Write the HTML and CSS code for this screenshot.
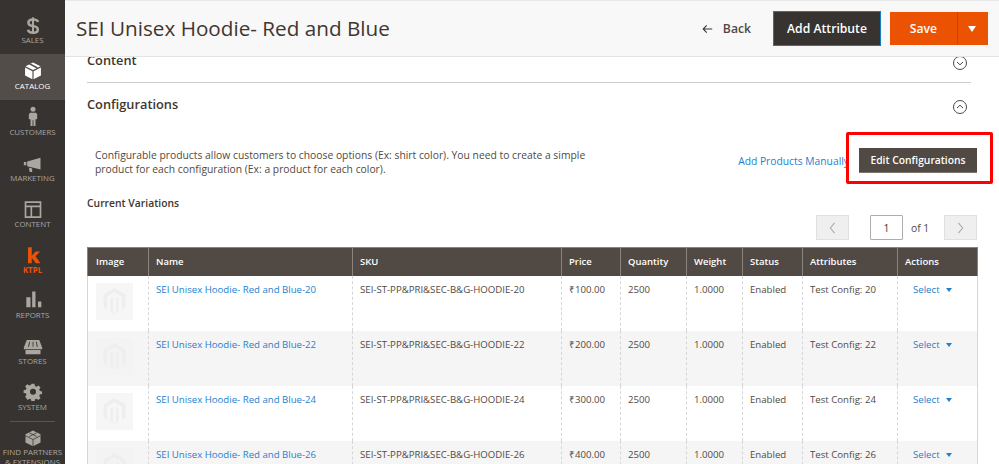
FILE: index.html
```html
<!DOCTYPE html>
<html lang="en">
<head>
<meta charset="utf-8">
<title>SEI Unisex Hoodie- Red and Blue</title>
<link rel="stylesheet" href="styles.css">
</head>
<body>
<div class="app">
  <nav class="side">
    <a class="nav-item"><svg class="nav-ico" viewBox="0 0 24 24"><path fill="none" stroke="#aaa6a0" stroke-width="3" d="M18 9.500C17.500 7 15 6.500 12 6.500S6.500 7.500 6.500 10.500 9 14 12 14.500s5.800 1 5.800 4-2.800 4-5.800 4-5.500-1-6-3.500"/><path stroke="#aaa6a0" stroke-width="2.500" d="M12 4v21"/></svg><span>SALES</span></a>
    <a class="nav-item active"><svg class="nav-ico" viewBox="0 0 24 24"><path fill="#fff" d="M12 3 3 7.500l9 4.500 9-4.500zM2.500 9v9.500l8.800 4.500v-9.500zM21.500 9l-8.800 4.500V23l8.800-4.500z"/><path fill="#524d49" d="M7 5.200 16 9.800l2-1L9 4.200z"/></svg><span>CATALOG</span></a>
    <a class="nav-item"><svg class="nav-ico" viewBox="0 0 24 24"><circle cx="12" cy="4" r="3" fill="#aaa6a0"/><path fill="#aaa6a0" d="M8.500 8h7l1.500 2v6h-2v8h-2.500v-7h-1v7H9v-8H7v-6z"/></svg><span>CUSTOMERS</span></a>
    <a class="nav-item"><svg class="nav-ico" viewBox="0 0 24 24"><path fill="#aaa6a0" d="M1 12h3v4H1zM5 11.500 21 7v14L5 17zM7 18.500l4 1.200V24H8z"/></svg><span>MARKETING</span></a>
    <a class="nav-item"><svg class="nav-ico" viewBox="0 0 24 24"><path fill="#aaa6a0" d="M2 4h20v20H2zm2 2v3h16V6zm0 5v11h5V11zm7 0v11h9V11z"/></svg><span>CONTENT</span></a>
    <a class="nav-item ktpl"><svg class="nav-ico" viewBox="0 0 24 24"><path fill="#eb5202" d="M6 4h4.500v10L15 9h5.500l-5.500 5.800L21 23h-5.500l-5-6.600V23H6z"/></svg><span>KTPL</span></a>
    <a class="nav-item"><svg class="nav-ico" viewBox="0 0 24 24"><path fill="#aaa6a0" d="M4 10h5v12H4zM11 3h4v19h-4zM18 15h4v7h-4z"/></svg><span>REPORTS</span></a>
    <a class="nav-item"><svg class="nav-ico" viewBox="0 0 24 24"><path fill="#aaa6a0" d="M4.500 6h15L23 15v2H1v-2zM3 18h18v5H3z"/><path fill="#373330" d="M7.500 8h1l-1.300 6H6zM11.500 8h1v6h-1zM15.500 8h1l1.300 6h-1.200z"/></svg><span>STORES</span></a>
    <a class="nav-item"><svg class="nav-ico" viewBox="0 0 24 24"><path fill="#aaa6a0" fill-rule="evenodd" d="m10 2 4 0 .6 3 2 .9 2.600-1.700 2.800 2.800-1.700 2.600.8 2 3 .6v3.600l-3 .6-.8 2 1.700 2.600-2.800 2.800-2.600-1.700-2 .9-.6 2.800h-4l-.6-2.800-2-.9-2.600 1.700L1.600 19.400l1.700-2.600-.8-2-3-.6v-3.600l3-.6.8-2L1.600 5.400l2.800-2.800L7 4.300l2.400-1.100zM12 8.500a4 4 0 1 0 0 8 4 4 0 0 0 0-8z" transform="translate(1.200 1.500) scale(.9)"/></svg><span>SYSTEM</span></a>
    <div class="nav-sep"></div>
    <a class="nav-item partners"><svg class="nav-ico" viewBox="0 0 24 24"><path fill="#aaa6a0" d="M12 2 22 7v11l-10 5-10-5V7z"/><path fill="none" stroke="#373330" stroke-width="1" d="M2 9l10 5 10-5M12 14v9M7 5l10 5M17 5 7 10"/></svg><span>FIND PARTNERS<br>&amp; EXTENSIONS</span></a>
  </nav>

  <div class="main">
    <header class="top">
      <h1>SEI Unisex Hoodie- Red and Blue</h1>
      <div class="top-actions">
        <a class="back"><svg viewBox="0 0 14 12" class="back-ico"><path fill="none" stroke="#41362f" stroke-width="1.400" d="M13 6H2M6 1.500 1.500 6 6 10.500"/></svg>Back</a>
        <button class="btn-dark">Add Attribute</button>
        <div class="save"><button class="save-main">Save</button><button class="save-arrow"><span class="tri"></span></button></div>
      </div>
    </header>

    <div class="content">
      <section class="sec sec-content">
        <h2>Content</h2>
        <svg class="chev" viewBox="0 0 16 16"><circle cx="8" cy="8" r="6.500" fill="none" stroke="#514943" stroke-width="1"/><path d="M5 7l3 2.800L11 7" fill="none" stroke="#514943" stroke-width="1"/></svg>
      </section>
      <section class="sec sec-conf">
        <h2>Configurations</h2>
        <svg class="chev" viewBox="0 0 16 16"><circle cx="8" cy="8" r="6.500" fill="none" stroke="#514943" stroke-width="1"/><path d="M5 9l3-2.800L11 9" fill="none" stroke="#514943" stroke-width="1"/></svg>
      </section>

      <div class="intro">
        <p>Configurable products allow customers to choose options (Ex: shirt color). You need to create a simple product for each configuration (Ex: a product for each color).</p>
        <div class="intro-actions">
          <a class="link">Add Products Manually</a>
          <button class="btn-edit">Edit Configurations</button>
        </div>
        <div class="redbox"></div>
      </div>

      <h3>Current Variations</h3>

      <div class="pager">
        <button class="page-btn"><svg viewBox="0 0 8 14"><path d="M6.500 1 1.500 7l5 6" fill="none" stroke="#a8a8a8" stroke-width="1.200"/></svg></button>
        <input class="page-input" value="1" aria-label="Page">
        <span class="page-of">of 1</span>
        <button class="page-btn"><svg viewBox="0 0 8 14"><path d="M1.500 1l5 6-5 6" fill="none" stroke="#a8a8a8" stroke-width="1.200"/></svg></button>
      </div>

      <table class="grid">
        <colgroup><col class="c1"><col class="c2"><col class="c3"><col class="c4"><col class="c5"><col class="c6"><col class="c7"><col class="c8"><col class="c9"></colgroup>
        <thead><tr><th>Image</th><th>Name</th><th>SKU</th><th>Price</th><th>Quantity</th><th>Weight</th><th>Status</th><th>Attributes</th><th>Actions</th></tr></thead>
        <tbody>
          <tr>
            <td><span class="thumb"><svg viewBox="0 0 24 28"><path fill="#eee" d="M12 1 23 7.500v13L19.500 22.500V9.500L12 5.200 4.500 9.500v13L1 20.500v-13zM10.500 9.800v15.400L12 26l1.500-.8V9.800L16 11.200v13.200L12 27l-4-2.600V11.200z"/></svg></span></td>
            <td><a class="link">SEI Unisex Hoodie- Red and Blue-20</a></td><td>SEI-ST-PP&amp;PRI&amp;SEC-B&amp;G-HOODIE-20</td><td>₹100.00</td><td>2500</td><td>1.0000</td><td>Enabled</td><td>Test Config: 20</td><td><a class="link sel">Select<span class="tri-sm"></span></a></td>
          </tr>
          <tr>
            <td><span class="thumb"><svg viewBox="0 0 24 28"><path fill="#eee" d="M12 1 23 7.500v13L19.500 22.500V9.500L12 5.200 4.500 9.500v13L1 20.500v-13zM10.500 9.800v15.400L12 26l1.500-.8V9.800L16 11.200v13.200L12 27l-4-2.600V11.200z"/></svg></span></td>
            <td><a class="link">SEI Unisex Hoodie- Red and Blue-22</a></td><td>SEI-ST-PP&amp;PRI&amp;SEC-B&amp;G-HOODIE-22</td><td>₹200.00</td><td>2500</td><td>1.0000</td><td>Enabled</td><td>Test Config: 22</td><td><a class="link sel">Select<span class="tri-sm"></span></a></td>
          </tr>
          <tr>
            <td><span class="thumb"><svg viewBox="0 0 24 28"><path fill="#eee" d="M12 1 23 7.500v13L19.500 22.500V9.500L12 5.200 4.500 9.500v13L1 20.500v-13zM10.500 9.800v15.400L12 26l1.500-.8V9.800L16 11.200v13.200L12 27l-4-2.600V11.200z"/></svg></span></td>
            <td><a class="link">SEI Unisex Hoodie- Red and Blue-24</a></td><td>SEI-ST-PP&amp;PRI&amp;SEC-B&amp;G-HOODIE-24</td><td>₹300.00</td><td>2500</td><td>1.0000</td><td>Enabled</td><td>Test Config: 24</td><td><a class="link sel">Select<span class="tri-sm"></span></a></td>
          </tr>
          <tr>
            <td><span class="thumb"><svg viewBox="0 0 24 28"><path fill="#eee" d="M12 1 23 7.500v13L19.500 22.500V9.500L12 5.200 4.500 9.500v13L1 20.500v-13zM10.500 9.800v15.400L12 26l1.500-.8V9.800L16 11.200v13.200L12 27l-4-2.600V11.200z"/></svg></span></td>
            <td><a class="link">SEI Unisex Hoodie- Red and Blue-26</a></td><td>SEI-ST-PP&amp;PRI&amp;SEC-B&amp;G-HOODIE-26</td><td>₹400.00</td><td>2500</td><td>1.0000</td><td>Enabled</td><td>Test Config: 26</td><td><a class="link sel">Select<span class="tri-sm"></span></a></td>
          </tr>
        </tbody>
      </table>
    </div>
  </div>
</div>
</body>
</html>
```

FILE: styles.css
```css
* { box-sizing: border-box; }
html, body { margin: 0; height: 100%; overflow: hidden; }
body { font-family: "Open Sans", "Liberation Sans", sans-serif; color: #41362f; background: #fff; }
.app { display: flex; height: 464px; overflow: hidden; }

.side { width: 65px; flex: none; background: #373330; display: flex; flex-direction: column; overflow: hidden; }
.nav-item { height: 46px; flex: none; display: flex; flex-direction: column; align-items: center; justify-content: flex-end; padding-bottom: 8px; color: #aaa6a0; font-size: 7.900px; line-height: 12px; text-align: center; white-space: nowrap; }
.nav-item:first-child { height: 54px; }
.nav-item.active { background: #524d49; color: #fff; }
.nav-ico { width: 20px; height: 20px; display: block; margin-bottom: 0; flex: none; }
.ktpl { color: #eb5202; font-weight: 700; height: 45px; padding-bottom: 7px; }
.nav-sep { height: 1px; background: #5a5550; margin: 0 10px; flex: none; }
.partners { height: auto; padding: 7px 0 0; justify-content: flex-start; font-size: 8px; line-height: 10px; }
.partners .nav-ico { width: 18px; height: 18px; }

.main { flex: 1; min-width: 0; display: flex; flex-direction: column; }
.top { height: 57px; flex: none; position: relative; z-index: 1; background: #f8f8f8; border-top: 1px solid #e8e8e8; border-bottom: 1px solid #e3e3e3; display: flex; align-items: center; justify-content: space-between; padding: 0 11px; }
h1 { margin: 0; padding-bottom: 2px; font-size: 20.700px; font-weight: 400; color: #41362f; line-height: 28px; }
.top-actions { display: flex; align-items: center; }
.back { display: flex; align-items: center; font-size: 12.200px; font-weight: 600; color: #514943; margin-right: 22px; }
.back-ico { width: 11px; height: 10px; margin-right: 10px; }
.btn-dark { width: 108px; height: 35px; background: #373330; color: #fff; border: 1px solid #1979c3; font: 600 12.200px "Open Sans", sans-serif; padding: 0; margin-right: 9px; }
.save { display: flex; height: 33px; }
.save-main { width: 67px; height: 33px; border: 0; background: #eb5202; color: #fff; font: 600 12.200px "Open Sans", sans-serif; padding: 0; }
.save-arrow { width: 31px; height: 33px; border: 0; border-left: 1px solid #c84600; background: #eb5202; padding: 0 2px 0 0; display: flex; align-items: center; justify-content: center; }
.tri { width: 0; height: 0; border-left: 4.500px solid transparent; border-right: 4.500px solid transparent; border-top: 6px solid #fff; }

.content { flex: 1; min-height: 0; padding: 0 22px; position: relative; }
.sec { display: flex; justify-content: space-between; padding-right: 2px; margin-right: 6px; }
.sec h2 { margin: 0; font-size: 12.800px; line-height: 18px; font-weight: 600; color: #41362f; }
.chev { width: 16px; height: 16px; margin-right: 1px; }
.sec-content { height: 26px; border-bottom: 1px solid #ccc; align-items: flex-start; }
.sec-content h2 { margin-top: -6px; }
.sec-content .chev { margin-top: -2px; }
.sec-conf { height: 44px; align-items: center; padding-bottom: 2px; }
.sec-conf .chev { margin-top: 6px; }

.intro { display: flex; justify-content: space-between; align-items: flex-start; margin-top: 21px; position: relative; padding-left: 8px; height: 29px; }
.intro p { margin: 0; width: 510px; font-size: 10.330px; line-height: 14px; color: #514943; }
.intro-actions { display: flex; align-items: center; }
.link { color: #1e80d0; text-decoration: none; font-size: 10.300px; }
.intro-actions .link { margin-right: 10px; }
.btn-edit { width: 118px; height: 25px; background: #514943; color: #fff; border: 0; border-bottom: 1px solid #7d746d; padding: 0; font: 600 10.300px "Open Sans", sans-serif; }
.redbox { position: absolute; right: -16px; top: -16px; width: 147px; height: 52px; border: 3px solid #f00; border-radius: 2px; pointer-events: none; }

h3 { margin: 19px 0 0; font-size: 10.350px; line-height: 14px; font-weight: 600; color: #41362f; }

.pager { display: flex; justify-content: flex-end; align-items: center; margin-top: 5px; height: 25px; }
.page-btn { width: 33px; height: 25px; background: #efefef; border: 1px solid #e0e0e0; padding: 0; display: flex; align-items: center; justify-content: center; }
.page-btn svg { width: 7px; height: 12px; }
.page-input { width: 33px; height: 25px; margin-left: 21px; border: 1px solid #adadad; border-radius: 1px; text-align: center; font: 10.300px "Open Sans", sans-serif; color: #41362f; padding: 0; outline: 0; }
.page-of { font-size: 10.300px; width: 18px; white-space: nowrap; color: #514943; margin: 0 15px 0 8px; }

.grid { border-collapse: collapse; table-layout: fixed; width: 890px; margin-top: 7px; font-size: 9.650px; }
.c1 { width: 61px; } .c2 { width: 204px; } .c3 { width: 209px; } .c4 { width: 59px; } .c5 { width: 66px; } .c6 { width: 56px; } .c7 { width: 60px; } .c8 { width: 95px; } .c9 { width: 80px; }
.grid th { height: 28px; padding: 0 7px 1px; background: #514943; color: #fff; font-weight: 600; text-align: left; border: 1px solid #8a837e; border-width: 1px 1px 0 1px; font-size: 9.500px; }
.grid th:first-child { padding-left: 8px; }
.grid td { height: 55px; padding: 7px 7px 0; vertical-align: top; line-height: 14px; color: #514943; border-left: 1px dashed #d6d6d6; border-right: 1px dashed #d6d6d6; white-space: nowrap; }
.grid td:first-child { border-left: 1px solid #d6d6d6; padding-left: 8px; padding-top: 7px; }
.grid td:last-child { border-right: 1px solid #d6d6d6; }
.grid .link { font-size: 9.650px; }
.grid tbody tr:nth-child(even) td { background: #f5f5f5; }
.thumb { display: flex; width: 37px; height: 37px; background: #f6f6f6; align-items: center; justify-content: center; }
.grid tbody tr:nth-child(even) .thumb { background: #f3f3f3; }
.thumb svg { width: 25px; height: 28px; }
.sel { margin-left: 8px; display: inline-flex; align-items: center; }
.tri-sm { width: 0; height: 0; margin-left: 6px; border-left: 3.500px solid transparent; border-right: 3.500px solid transparent; border-top: 4px solid #1e80d0; }
```
